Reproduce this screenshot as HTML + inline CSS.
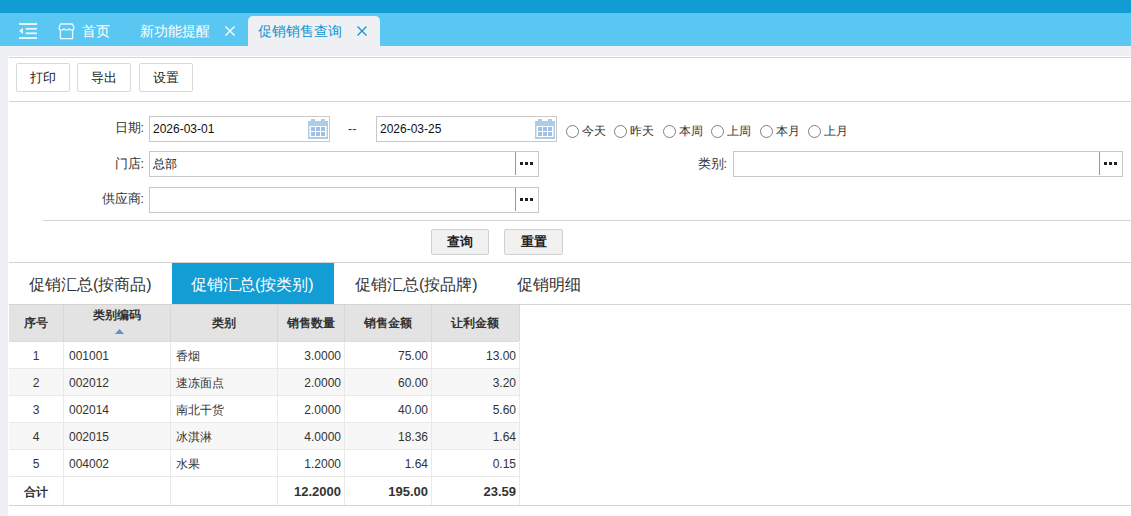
<!DOCTYPE html>
<html><head><meta charset="utf-8">
<style>
*{box-sizing:border-box;margin:0;padding:0}
html,body{width:1131px;height:516px;overflow:hidden;background:#eff0f4;font-family:"Liberation Sans",sans-serif;font-size:13px;color:#333}
.abs{position:absolute}
#top{left:0;top:0;width:1131px;height:13px;background:#119dd3}
#tabbar{left:0;top:13px;width:1131px;height:33px;background:#5ac7f3}
.tabtxt{color:#fff;font-size:14px;line-height:16px;white-space:nowrap}
#active{left:248px;top:16px;width:132px;height:30px;background:#eff0f4;border-radius:5px 5px 0 0}
#panel{left:8px;top:56px;width:1123px;height:460px;background:#fff}
.hl{height:1px;background:#d4d4d4}
.btn{border:1px solid #d9d9d9;border-radius:2px;background:#fff;height:29px;width:54px;text-align:center;line-height:28px;font-size:13px;color:#222}
.lbl{font-size:12.5px;color:#333;text-align:right;line-height:16px;white-space:nowrap}
.inp{border:1px solid #c8c8c8;background:#fff;height:26px;font-size:12px;line-height:24px;padding-left:3px;color:#111}
.dots{border-left:1px solid #c8c8c8;width:23px;height:24px;top:0;right:0}
.rl{font-size:12px;line-height:14px;color:#333;white-space:nowrap}
.radio{width:13px;height:13px;border:1px solid #808080;border-radius:50%}
.qbtn{border:1px solid #d0d0d0;border-radius:2px;background:#f1f1f1;height:26px;text-align:center;line-height:24px;font-size:13px;font-weight:bold;color:#222}
.tab{font-size:16px;line-height:20px;color:#333;white-space:nowrap}
.th{font-size:12px;font-weight:bold;line-height:14px;text-align:center;color:#333;white-space:nowrap}
.td{font-size:12px;color:#333;white-space:nowrap;padding-top:1px}
</style></head><body>
<div id="top" class="abs"></div>
<div id="tabbar" class="abs"></div>
<!-- menu icon -->
<svg class="abs" style="left:19px;top:23px" width="19" height="16" viewBox="0 0 19 16">
<g fill="#fff" fill-opacity="0.85">
<rect x="0" y="0" width="18" height="2"/>
<rect x="6.6" y="4.9" width="11.4" height="1.8"/>
<rect x="6.6" y="9.4" width="11.4" height="1.8"/>
<rect x="0" y="14" width="18" height="2"/>
<path d="M0 7.9 L4 4.8 L4 11 Z"/>
</g>
</svg>
<!-- home icon -->
<svg class="abs" style="left:54px;top:18px" width="26" height="26" viewBox="0 0 26 26">
<g fill="none" stroke="#fff" stroke-opacity="0.9" stroke-width="1.3" stroke-linejoin="round">
<path d="M6.8 6 H18.2 Q19.6 7.5 20 10 Q19.6 12.2 17.6 12.2 Q15.6 12.2 15 10.8 Q14.2 12.2 12.5 12.2 Q10.8 12.2 10 10.8 Q9.4 12.2 7.4 12.2 Q5.4 12.2 5 10 Q5.4 7.5 6.8 6 Z"/>
<path d="M6.4 12 V20.6 H18.6 V12"/>
</g>
</svg>
<div class="abs tabtxt" style="left:82px;top:23px">首页</div>
<div class="abs tabtxt" style="left:140px;top:23px">新功能提醒</div>
<svg class="abs" style="left:225px;top:26px" width="10" height="10" viewBox="0 0 10 10"><path d="M0.5 0.5 L9.5 9.5 M9.5 0.5 L0.5 9.5" stroke="#fff" stroke-width="1.3"/></svg>
<div id="active" class="abs"></div>
<div class="abs tabtxt" style="left:258px;top:23px;color:#0b92d2">促销销售查询</div>
<svg class="abs" style="left:357px;top:26px" width="10" height="10" viewBox="0 0 10 10"><path d="M0.5 0.5 L9.5 9.5 M9.5 0.5 L0.5 9.5" stroke="#1294d0" stroke-width="1.3"/></svg>

<div id="panel" class="abs"></div>
<div class="abs hl" style="left:9px;top:57px;width:1122px"></div>
<div class="abs btn" style="left:16px;top:63px">打印</div>
<div class="abs btn" style="left:77px;top:63px">导出</div>
<div class="abs btn" style="left:139px;top:63px">设置</div>
<div class="abs hl" style="left:9px;top:101px;width:1122px"></div>

<!-- form -->
<div class="abs lbl" style="left:88px;top:120px;width:56px">日期:</div>
<div class="abs inp" style="left:149px;top:116px;width:181px">2026-03-01</div>
<div class="abs lbl" style="left:348px;top:121px">--</div>
<div class="abs inp" style="left:376px;top:116px;width:181px">2026-03-25</div>

<svg class="abs" style="left:308px;top:119px" width="20" height="20" viewBox="0 0 20 20"><rect x="0" y="2" width="20" height="18" fill="#abcde9"/><rect x="3" y="0" width="4" height="2" fill="#abcde9"/><rect x="13" y="0" width="4" height="2" fill="#abcde9"/><rect x="1.5" y="7" width="17" height="11" fill="#fff"/><rect x="3" y="8" width="4" height="4" fill="#9fc1df"/><rect x="8" y="8" width="4" height="4" fill="#9fc1df"/><rect x="13" y="8" width="4" height="4" fill="#9fc1df"/><rect x="3" y="13" width="4" height="4" fill="#9fc1df"/><rect x="8" y="13" width="4" height="4" fill="#9fc1df"/><rect x="13" y="13" width="4" height="4" fill="#9fc1df"/></svg><svg class="abs" style="left:535px;top:119px" width="20" height="20" viewBox="0 0 20 20"><rect x="0" y="2" width="20" height="18" fill="#abcde9"/><rect x="3" y="0" width="4" height="2" fill="#abcde9"/><rect x="13" y="0" width="4" height="2" fill="#abcde9"/><rect x="1.5" y="7" width="17" height="11" fill="#fff"/><rect x="3" y="8" width="4" height="4" fill="#9fc1df"/><rect x="8" y="8" width="4" height="4" fill="#9fc1df"/><rect x="13" y="8" width="4" height="4" fill="#9fc1df"/><rect x="3" y="13" width="4" height="4" fill="#9fc1df"/><rect x="8" y="13" width="4" height="4" fill="#9fc1df"/><rect x="13" y="13" width="4" height="4" fill="#9fc1df"/></svg><div class="abs radio" style="left:566px;top:125px"></div><div class="abs rl" style="left:582px;top:124px">今天</div><div class="abs radio" style="left:614px;top:125px"></div><div class="abs rl" style="left:630px;top:124px">昨天</div><div class="abs radio" style="left:663px;top:125px"></div><div class="abs rl" style="left:679px;top:124px">本周</div><div class="abs radio" style="left:711px;top:125px"></div><div class="abs rl" style="left:727px;top:124px">上周</div><div class="abs radio" style="left:760px;top:125px"></div><div class="abs rl" style="left:776px;top:124px">本月</div><div class="abs radio" style="left:808px;top:125px"></div><div class="abs rl" style="left:824px;top:124px">上月</div>
<div class="abs lbl" style="left:88px;top:156px;width:56px">门店:</div>
<div class="abs inp" style="left:149px;top:151px;width:390px">总部</div>
<div class="abs lbl" style="left:659px;top:156px;width:68px">类别:</div>
<div class="abs inp" style="left:733px;top:151px;width:390px"></div>
<div class="abs lbl" style="left:78px;top:191px;width:66px">供应商:</div>
<div class="abs inp" style="left:149px;top:187px;width:390px"></div>
<div class="abs" style="left:515px;top:152px;width:1px;height:23px;background:#999"></div><svg class="abs" style="left:520px;top:162px" width="14" height="3" viewBox="0 0 14 3"><rect x="0" y="0" width="3" height="3" fill="#222"/><rect x="5" y="0" width="3" height="3" fill="#222"/><rect x="10" y="0" width="3" height="3" fill="#222"/></svg><div class="abs" style="left:515px;top:188px;width:1px;height:23px;background:#999"></div><svg class="abs" style="left:520px;top:198px" width="14" height="3" viewBox="0 0 14 3"><rect x="0" y="0" width="3" height="3" fill="#222"/><rect x="5" y="0" width="3" height="3" fill="#222"/><rect x="10" y="0" width="3" height="3" fill="#222"/></svg><div class="abs" style="left:1099px;top:152px;width:1px;height:23px;background:#999"></div><svg class="abs" style="left:1104px;top:162px" width="14" height="3" viewBox="0 0 14 3"><rect x="0" y="0" width="3" height="3" fill="#222"/><rect x="5" y="0" width="3" height="3" fill="#222"/><rect x="10" y="0" width="3" height="3" fill="#222"/></svg>
<div class="abs hl" style="left:43px;top:220px;width:1088px"></div>
<div class="abs qbtn" style="left:431px;top:229px;width:58px">查询</div>
<div class="abs qbtn" style="left:504px;top:229px;width:59px">重置</div>
<div class="abs hl" style="left:9px;top:262px;width:1122px"></div>

<!-- tabs -->
<div class="abs" style="left:172px;top:263px;width:162px;height:41px;background:#129dd4"></div>
<div class="abs tab" style="left:29px;top:275px">促销汇总(按商品)</div>
<div class="abs tab" style="left:191px;top:275px;color:#fff">促销汇总(按类别)</div>
<div class="abs tab" style="left:355px;top:275px">促销汇总(按品牌)</div>
<div class="abs tab" style="left:517px;top:275px">促销明细</div>


<div class="abs" style="left:9px;top:305px;width:510px;height:36px;background:#e3e3e3"></div>
<div class="abs" style="left:9px;top:369px;width:510px;height:26px;background:#f7f7f7"></div>
<div class="abs" style="left:9px;top:423px;width:510px;height:26px;background:#f7f7f7"></div>
<div class="abs" style="left:9px;top:304px;width:1122px;height:1px;background:#d4d4d4"></div>
<div class="abs" style="left:9px;top:341px;width:510px;height:1px;background:#dcdcdc"></div>
<div class="abs" style="left:9px;top:368px;width:510px;height:1px;background:#e9e9e9"></div>
<div class="abs" style="left:9px;top:395px;width:510px;height:1px;background:#e9e9e9"></div>
<div class="abs" style="left:9px;top:422px;width:510px;height:1px;background:#e9e9e9"></div>
<div class="abs" style="left:9px;top:449px;width:510px;height:1px;background:#e9e9e9"></div>
<div class="abs" style="left:9px;top:476px;width:510px;height:1px;background:#e9e9e9"></div>
<div class="abs" style="left:9px;top:505px;width:1122px;height:1px;background:#d4d4d4"></div>
<div class="abs" style="left:63px;top:305px;width:1px;height:36px;background:#d6d6d6"></div>
<div class="abs" style="left:63px;top:342px;width:1px;height:163px;background:#e9e9e9"></div>
<div class="abs" style="left:170px;top:305px;width:1px;height:36px;background:#d6d6d6"></div>
<div class="abs" style="left:170px;top:342px;width:1px;height:163px;background:#e9e9e9"></div>
<div class="abs" style="left:277px;top:305px;width:1px;height:36px;background:#d6d6d6"></div>
<div class="abs" style="left:277px;top:342px;width:1px;height:163px;background:#e9e9e9"></div>
<div class="abs" style="left:344px;top:305px;width:1px;height:36px;background:#d6d6d6"></div>
<div class="abs" style="left:344px;top:342px;width:1px;height:163px;background:#e9e9e9"></div>
<div class="abs" style="left:431px;top:305px;width:1px;height:36px;background:#d6d6d6"></div>
<div class="abs" style="left:431px;top:342px;width:1px;height:163px;background:#e9e9e9"></div>
<div class="abs" style="left:519px;top:305px;width:1px;height:36px;background:#d6d6d6"></div>
<div class="abs" style="left:519px;top:342px;width:1px;height:163px;background:#e9e9e9"></div>
<div class="abs th" style="left:9px;top:316px;width:54px">序号</div>
<div class="abs th" style="left:63px;top:308px;width:107px">类别编码</div>
<div class="abs th" style="left:170px;top:316px;width:107px">类别</div>
<div class="abs th" style="left:277px;top:316px;width:67px">销售数量</div>
<div class="abs th" style="left:344px;top:316px;width:87px">销售金额</div>
<div class="abs th" style="left:431px;top:316px;width:88px">让利金额</div>
<svg class="abs" style="left:115px;top:329px" width="9" height="5" viewBox="0 0 9 5"><path d="M0 5 L4.5 0 L9 5 Z" fill="#5b8fd6"/></svg>
<div class="abs td" style="left:9px;top:342px;width:54px;height:26px;line-height:26px;text-align:center">1</div>
<div class="abs td" style="left:63px;top:342px;width:107px;height:26px;line-height:26px;text-align:left;padding-left:6px">001001</div>
<div class="abs td" style="left:170px;top:342px;width:107px;height:26px;line-height:26px;text-align:left;padding-left:6px">香烟</div>
<div class="abs td" style="left:277px;top:342px;width:67px;height:26px;line-height:26px;text-align:right;padding-right:3px">3.0000</div>
<div class="abs td" style="left:344px;top:342px;width:87px;height:26px;line-height:26px;text-align:right;padding-right:3px">75.00</div>
<div class="abs td" style="left:431px;top:342px;width:88px;height:26px;line-height:26px;text-align:right;padding-right:3px">13.00</div>
<div class="abs td" style="left:9px;top:369px;width:54px;height:26px;line-height:26px;text-align:center">2</div>
<div class="abs td" style="left:63px;top:369px;width:107px;height:26px;line-height:26px;text-align:left;padding-left:6px">002012</div>
<div class="abs td" style="left:170px;top:369px;width:107px;height:26px;line-height:26px;text-align:left;padding-left:6px">速冻面点</div>
<div class="abs td" style="left:277px;top:369px;width:67px;height:26px;line-height:26px;text-align:right;padding-right:3px">2.0000</div>
<div class="abs td" style="left:344px;top:369px;width:87px;height:26px;line-height:26px;text-align:right;padding-right:3px">60.00</div>
<div class="abs td" style="left:431px;top:369px;width:88px;height:26px;line-height:26px;text-align:right;padding-right:3px">3.20</div>
<div class="abs td" style="left:9px;top:396px;width:54px;height:26px;line-height:26px;text-align:center">3</div>
<div class="abs td" style="left:63px;top:396px;width:107px;height:26px;line-height:26px;text-align:left;padding-left:6px">002014</div>
<div class="abs td" style="left:170px;top:396px;width:107px;height:26px;line-height:26px;text-align:left;padding-left:6px">南北干货</div>
<div class="abs td" style="left:277px;top:396px;width:67px;height:26px;line-height:26px;text-align:right;padding-right:3px">2.0000</div>
<div class="abs td" style="left:344px;top:396px;width:87px;height:26px;line-height:26px;text-align:right;padding-right:3px">40.00</div>
<div class="abs td" style="left:431px;top:396px;width:88px;height:26px;line-height:26px;text-align:right;padding-right:3px">5.60</div>
<div class="abs td" style="left:9px;top:423px;width:54px;height:26px;line-height:26px;text-align:center">4</div>
<div class="abs td" style="left:63px;top:423px;width:107px;height:26px;line-height:26px;text-align:left;padding-left:6px">002015</div>
<div class="abs td" style="left:170px;top:423px;width:107px;height:26px;line-height:26px;text-align:left;padding-left:6px">冰淇淋</div>
<div class="abs td" style="left:277px;top:423px;width:67px;height:26px;line-height:26px;text-align:right;padding-right:3px">4.0000</div>
<div class="abs td" style="left:344px;top:423px;width:87px;height:26px;line-height:26px;text-align:right;padding-right:3px">18.36</div>
<div class="abs td" style="left:431px;top:423px;width:88px;height:26px;line-height:26px;text-align:right;padding-right:3px">1.64</div>
<div class="abs td" style="left:9px;top:450px;width:54px;height:26px;line-height:26px;text-align:center">5</div>
<div class="abs td" style="left:63px;top:450px;width:107px;height:26px;line-height:26px;text-align:left;padding-left:6px">004002</div>
<div class="abs td" style="left:170px;top:450px;width:107px;height:26px;line-height:26px;text-align:left;padding-left:6px">水果</div>
<div class="abs td" style="left:277px;top:450px;width:67px;height:26px;line-height:26px;text-align:right;padding-right:3px">1.2000</div>
<div class="abs td" style="left:344px;top:450px;width:87px;height:26px;line-height:26px;text-align:right;padding-right:3px">1.64</div>
<div class="abs td" style="left:431px;top:450px;width:88px;height:26px;line-height:26px;text-align:right;padding-right:3px">0.15</div>
<div class="abs td" style="left:9px;top:477px;width:54px;height:28px;line-height:28px;text-align:center;font-weight:bold">合计</div>
<div class="abs td" style="left:277px;top:477px;width:67px;height:28px;line-height:28px;text-align:right;padding-right:3px;font-weight:bold;font-size:13px">12.2000</div>
<div class="abs td" style="left:344px;top:477px;width:87px;height:28px;line-height:28px;text-align:right;padding-right:3px;font-weight:bold;font-size:13px">195.00</div>
<div class="abs td" style="left:431px;top:477px;width:88px;height:28px;line-height:28px;text-align:right;padding-right:3px;font-weight:bold;font-size:13px">23.59</div>
</body></html>
